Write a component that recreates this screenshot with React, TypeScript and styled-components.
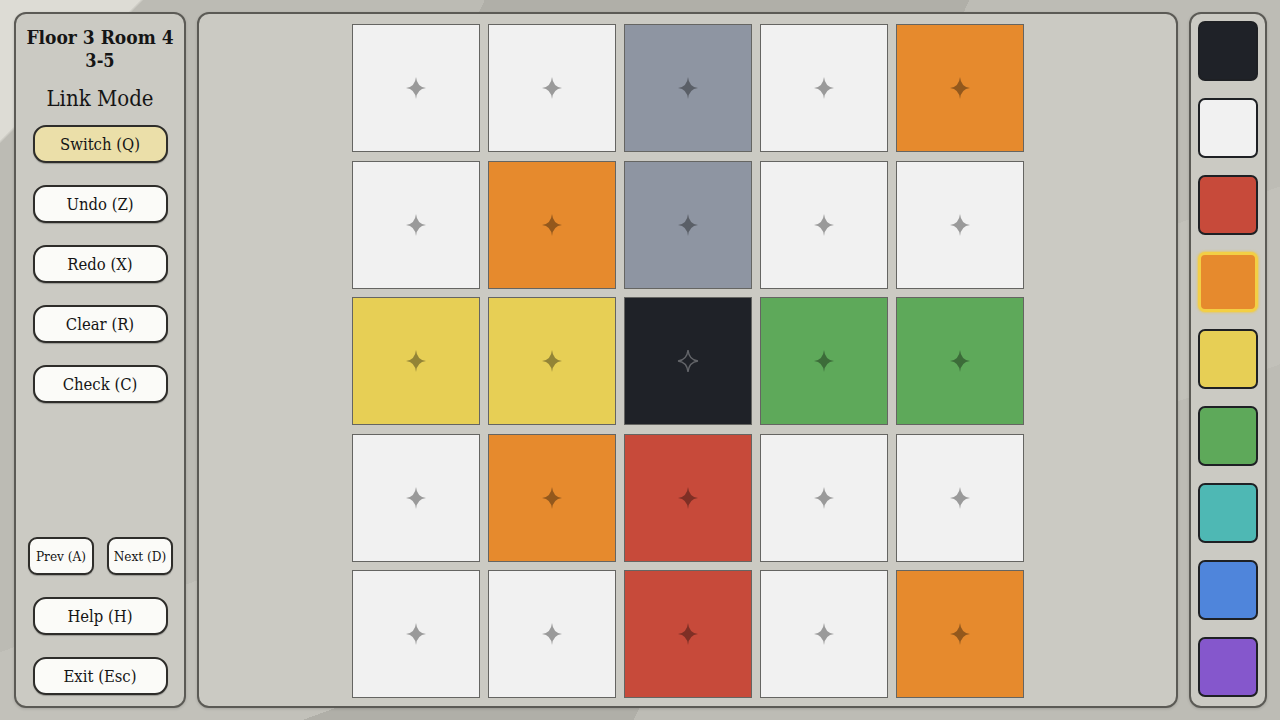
import React, { useState } from 'react';
import styled, { createGlobalStyle, css } from 'styled-components';

const GlobalStyle = createGlobalStyle`
  html, body {
    margin: 0;
    padding: 0;
    height: 100%;
  }
  body {
    font-family: "DejaVu Serif Condensed", "DejaVu Serif", "Liberation Serif", serif;
    background: #b8b7b0;
  }
`;

const Screen = styled.div`
  width: 1280px;
  height: 720px;
  box-sizing: border-box;
  padding: 12px 13px 12px 14px;
  display: flex;
  gap: 11px;
  overflow: hidden;
  background:
    linear-gradient(135deg, #dddcd5 0 7%, transparent 7.2%),
    linear-gradient(160deg, transparent 0 55%, #c2c1ba 55% 70%, transparent 70%),
    linear-gradient(115deg, #bcbbb4 0 30%, #b0afa8 30% 60%, #bdbcb5 60%);
`;

const Panel = styled.div`
  box-sizing: border-box;
  height: 696px;
  border: 2px solid #5b5a55;
  border-radius: 12px;
  background: #cbcac3;
  box-shadow: 0 1px 3px rgba(0, 0, 0, 0.15);
`;

const SidePanel = styled(Panel)`
  width: 172px;
  display: flex;
  flex-direction: column;
  align-items: center;
  padding: 10px 0 11px;
`;

const Board = styled(Panel)`
  width: 981px;
  display: flex;
  justify-content: center;
  padding-top: 10px;
`;

const Palette = styled(Panel)`
  width: 78px;
  display: flex;
  flex-direction: column;
  align-items: center;
  gap: 17px;
  padding-top: 7px;
`;

const Title = styled.div`
  font-weight: bold;
  font-size: 19px;
  line-height: 26px;
  color: #151515;
  text-align: center;
`;

const SubTitle = styled.div`
  font-weight: bold;
  font-size: 18px;
  line-height: 22px;
  color: #151515;
`;

const ModeLabel = styled.div`
  font-size: 22px;
  line-height: 26px;
  color: #151515;
  margin: 14px 0 13px;
`;

const ButtonStack = styled.div`
  display: flex;
  flex-direction: column;
  align-items: center;
  gap: 22px;
`;

const Spacer = styled.div`
  flex: 1;
`;

const Button = styled.button<{ $active?: boolean; $small?: boolean }>`
  box-sizing: border-box;
  width: ${p => (p.$small ? '66px' : '135px')};
  height: 38px;
  border: 2px solid #2e2d2a;
  border-radius: ${p => (p.$small ? '9px' : '13px')};
  background: ${p => (p.$active ? '#ebdfa9' : '#fbfbf8')};
  color: #151515;
  font-family: inherit;
  font-size: ${p => (p.$small ? '13.5px' : '16.5px')};
  padding: 0;
  cursor: pointer;
  box-shadow: 0 1px 1px rgba(0, 0, 0, 0.25);
`;

const NavRow = styled.div`
  display: flex;
  gap: 13px;
  margin-left: 1px;
`;

const Grid = styled.div`
  display: grid;
  grid-template-columns: repeat(5, 128px);
  grid-template-rows: repeat(5, 128px);
  column-gap: 8px;
  row-gap: 8.5px;
  align-content: start;
`;

const Cell = styled.div<{ $color: string }>`
  box-sizing: border-box;
  border: 1px solid #656562;
  background: ${p => p.$color};
  display: flex;
  align-items: center;
  justify-content: center;
`;

const Swatch = styled.div<{ $color: string; $selected?: boolean }>`
  box-sizing: border-box;
  width: 60px;
  height: 60px;
  border-radius: 7px;
  background: ${p => p.$color};
  border: 2px solid #1e2024;
  cursor: pointer;
  ${p =>
    p.$selected &&
    css`
      border: 3px solid #f3cf45;
      box-shadow: 0 0 2px 1px rgba(240, 200, 60, 0.6);
    `}
`;

const COLORS: Record<string, string> = {
  k: '#1f2228',
  w: '#f1f1f1',
  r: '#c74a3a',
  o: '#e68a2d',
  y: '#e7cf55',
  g: '#5ea95a',
  t: '#4eb8b4',
  b: '#4f85db',
  p: '#8557cc',
  s: '#8e95a2',
};

const BOARD = ['wwswo', 'wosww', 'yykgg', 'worww', 'wwrwo'];
const PALETTE = ['k', 'w', 'r', 'o', 'y', 'g', 't', 'b', 'p'];

// four-pointed marker drawn in the middle of every tile
const Star: React.FC<{ dark?: boolean }> = ({ dark }) => (
  <svg width="22" height="24" viewBox="-11 -12 22 24">
    <path
      d="M0 -11 Q1 -1 10 0 Q1 1 0 11 Q-1 1 -10 0 Q-1 -1 0 -11 Z"
      fill={dark ? 'none' : 'rgba(0,0,0,0.36)'}
      stroke={dark ? 'rgba(255,255,255,0.3)' : 'none'}
      strokeWidth={dark ? 1.4 : 0}
    />
  </svg>
);

const App: React.FC = () => {
  const [selected, setSelected] = useState('o');

  return (
    <>
      <GlobalStyle />
      <Screen>
        <SidePanel>
          <Title>Floor 3 Room 4</Title>
          <SubTitle>3-5</SubTitle>
          <ModeLabel>Link Mode</ModeLabel>
          <ButtonStack>
            <Button $active>Switch (Q)</Button>
            <Button>Undo (Z)</Button>
            <Button>Redo (X)</Button>
            <Button>Clear (R)</Button>
            <Button>Check (C)</Button>
          </ButtonStack>
          <Spacer />
          <ButtonStack>
            <NavRow>
              <Button $small>Prev (A)</Button>
              <Button $small>Next (D)</Button>
            </NavRow>
            <Button>Help (H)</Button>
            <Button>Exit (Esc)</Button>
          </ButtonStack>
        </SidePanel>

        <Board>
          <Grid>
            {BOARD.flatMap((row, r) =>
              row.split('').map((c, i) => (
                <Cell key={`${r}-${i}`} $color={COLORS[c]}>
                  <Star dark={c === 'k'} />
                </Cell>
              ))
            )}
          </Grid>
        </Board>

        <Palette>
          {PALETTE.map(c => (
            <Swatch
              key={c}
              $color={COLORS[c]}
              $selected={selected === c}
              onClick={() => setSelected(c)}
            />
          ))}
        </Palette>
      </Screen>
    </>
  );
};

export default App;
